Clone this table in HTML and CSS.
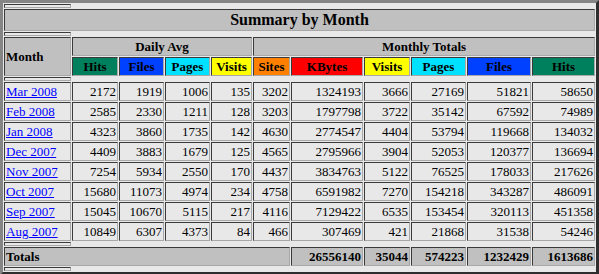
FILE: index.html
```html
<!DOCTYPE html>
<html>
<head>
<meta charset="utf-8">
<link rel="stylesheet" href="styles.css">
</head>
<body>
<table class="summary">
<colgroup>
<col class="c-month"><col class="c-dhits"><col class="c-dfiles"><col class="c-dpages"><col class="c-dvisits">
<col class="c-sites"><col class="c-kbytes"><col class="c-visits"><col class="c-pages"><col class="c-files"><col class="c-hits">
</colgroup>
<tr><th class="spacer"></th></tr>
<tr><th colspan="11" class="title">Summary by Month</th></tr>
<tr><th class="spacer"></th></tr>
<tr>
<th rowspan="2" class="grp left">Month</th>
<th colspan="4" class="grp">Daily Avg</th>
<th colspan="6" class="grp">Monthly Totals</th>
</tr>
<tr>
<th class="hits">Hits</th><th class="files">Files</th><th class="pages">Pages</th><th class="visits">Visits</th>
<th class="sites">Sites</th><th class="kbytes">KBytes</th><th class="visits">Visits</th><th class="pages">Pages</th><th class="files">Files</th><th class="hits">Hits</th>
</tr>
<tr><th class="spacer"></th></tr>
<tr><td class="month"><a href="#">Mar 2008</a></td><td>2172</td><td>1919</td><td>1006</td><td>135</td><td>3202</td><td>1324193</td><td>3666</td><td>27169</td><td>51821</td><td>58650</td></tr>
<tr><td class="month"><a href="#">Feb 2008</a></td><td>2585</td><td>2330</td><td>1211</td><td>128</td><td>3203</td><td>1797798</td><td>3722</td><td>35142</td><td>67592</td><td>74989</td></tr>
<tr><td class="month"><a href="#">Jan 2008</a></td><td>4323</td><td>3860</td><td>1735</td><td>142</td><td>4630</td><td>2774547</td><td>4404</td><td>53794</td><td>119668</td><td>134032</td></tr>
<tr><td class="month"><a href="#">Dec 2007</a></td><td>4409</td><td>3883</td><td>1679</td><td>125</td><td>4565</td><td>2795966</td><td>3904</td><td>52053</td><td>120377</td><td>136694</td></tr>
<tr><td class="month"><a href="#">Nov 2007</a></td><td>7254</td><td>5934</td><td>2550</td><td>170</td><td>4437</td><td>3834763</td><td>5122</td><td>76525</td><td>178033</td><td>217626</td></tr>
<tr><td class="month"><a href="#">Oct 2007</a></td><td>15680</td><td>11073</td><td>4974</td><td>234</td><td>4758</td><td>6591982</td><td>7270</td><td>154218</td><td>343287</td><td>486091</td></tr>
<tr><td class="month"><a href="#">Sep 2007</a></td><td>15045</td><td>10670</td><td>5115</td><td>217</td><td>4116</td><td>7129422</td><td>6535</td><td>153454</td><td>320113</td><td>451358</td></tr>
<tr><td class="month"><a href="#">Aug 2007</a></td><td>10849</td><td>6307</td><td>4373</td><td>84</td><td>466</td><td>307469</td><td>421</td><td>21868</td><td>31538</td><td>54246</td></tr>
<tr><th class="spacer"></th></tr>
<tr class="totals">
<th colspan="6" class="left">Totals</th><th class="num">26556140</th><th class="num">35044</th><th class="num">574223</th><th class="num">1232429</th><th class="num">1613686</th>
</tr>
<tr><th class="spacer"></th></tr>
</table>
</body>
</html>
```
FILE: styles.css
```css
html, body {
  margin: 0;
  padding: 0;
  background: #e8e8e8;
}
body {
  font-family: "Liberation Serif", "Times New Roman", serif;
  color: #000;
}
.summary {
  table-layout: fixed;
  width: 599px;
  border-collapse: separate;
  border-spacing: 1px;
  border-style: solid;
  border-width: 3px;
  border-color: #858585 #2e2e2e #2e2e2e #858585;
  font-size: 13px;
  line-height: 15px;
}
.c-month { width: 67px; }
.c-dhits { width: 46px; }
.c-dfiles { width: 45px; }
.c-dpages { width: 45px; }
.c-dvisits { width: 41px; }
.c-sites { width: 37px; }
.c-kbytes { width: 72px; }
.c-visits { width: 46px; }
.c-pages { width: 55px; }
.c-files { width: 64px; }
.c-hits { width: 63px; }
.summary th, .summary td {
  box-sizing: border-box;
  padding: 1px;
  border-style: solid;
  border-width: 1px;
  border-color: #3a3a3a #a8a8a8 #a8a8a8 #3a3a3a;
  white-space: nowrap;
  overflow: hidden;
}
.summary td {
  text-align: right;
}
.summary td.month {
  text-align: left;
}
.summary a {
  color: #0000ff;
  text-decoration: underline;
}
.summary th.spacer {
  height: 4px;
  padding: 0;
  line-height: 0;
  font-size: 0;
}
.summary th.title {
  background: #c0c0c0;
  font-size: 16px;
  line-height: 18px;
  text-align: center;
}
.summary th.grp {
  background: #c0c0c0;
  text-align: center;
}
.summary th.left {
  text-align: left;
}
.summary th.hits { background: #00805c; }
.summary th.files { background: #0040ff; }
.summary th.pages { background: #00e0ff; }
.summary th.visits { background: #ffff00; }
.summary th.sites { background: #ff8000; }
.summary th.kbytes { background: #ff0000; }
.totals th {
  background: #c0c0c0;
}
.totals th.num {
  text-align: right;
}
```
